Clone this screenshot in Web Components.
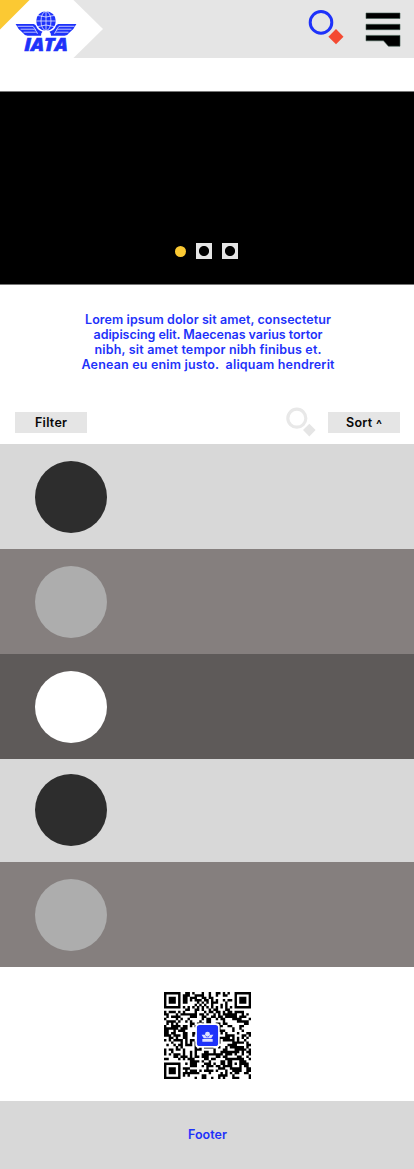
<!DOCTYPE html>
<html lang="en"><head><meta charset="utf-8"><title>IATA</title>
<style>body{margin:0;background:#fff;width:414px;overflow-x:hidden}</style></head>
<body><iata-page></iata-page>
<script>
const define=(name,html,ready)=>customElements.define(name,class extends HTMLElement{
 constructor(){super();this.attachShadow({mode:'open'}).innerHTML=html}
 connectedCallback(){if(ready)ready.call(this,this.shadowRoot)}
});

/* A single line of text tracked out to a given measure. */
define('fit-line',`<style>:host{display:block;line-height:inherit;white-space:pre}span{display:inline-block}</style><span><slot></slot></span>`,function(root){
 const s=root.querySelector('span'),w=+this.getAttribute('width'),n=this.textContent.length;
 const now=s.getBoundingClientRect().width;
 const gap=(w-now)/(n-1);
 s.style.letterSpacing=gap+'px';
 s.style.marginRight=-gap+'px';
});

define('iata-logo',`<style>:host{display:block}svg{display:block}</style>
<svg width="104" height="58" viewBox="0 0 104 58">
<path fill="#fff" d="M0 0H73.500L103 29 73.500 58H0z"/><path fill="#fbc933" d="M0 0H29.500L0 29.500z"/>
<g fill="#1e32fa">
<path d="M15.600 24H33.500Q36 24.500 37 28Q39 31 42.500 31.800Q41 33 41 35.800H27.500Q24.500 35.500 23 33Q18 29.500 15.600 24z"/>
<path d="M76.400 24H58.500Q56 24.500 55 28Q53 31 49.500 31.800Q51 33 51 35.800H64.500Q67.500 35.500 69 33Q74 29.500 76.400 24z"/>
<circle cx="46" cy="21" r="9.800"/></g>
<g fill="none" stroke="#fff" stroke-width=".7">
<path d="M17.500 26.300H33l3 4M20.500 29.200H34l3 3M23.500 32.200H35.500l2.500 1.200M74.500 26.300H59l-3 4M71.500 29.200H58l-3 3M68.500 32.200H56.500l-2.500 1.200"/>
<path d="M46 11V31M36 21H56M38 15.500Q46 18.500 54 15.500M38 26.500Q46 23.500 54 26.500"/><ellipse cx="46" cy="21" rx="5" ry="9.600"/></g>
<text x="24.300" y="50.700" textLength="43.400" lengthAdjust="spacingAndGlyphs" font-family="Open Sans,sans-serif" font-size="17.600" font-weight="800" font-style="italic" fill="#1e32fa" stroke="#1e32fa" stroke-width=".6">IATA</text>
</svg>`);

define('search-icon',`<style>:host{display:block;width:36px;height:36px;--ring:#1e32fa;--gem:#f44a32;--w:3}svg{display:block;width:100%;height:100%}circle{stroke-width:var(--w)}</style>
<svg viewBox="0 0 36 36"><circle cx="13" cy="13.400" r="10.800" fill="none" stroke="var(--ring)"/><path d="M28 20l7.500 7.700-7.500 7.600-7.600-7.600z" fill="var(--gem)"/></svg>`);

define('menu-icon',`<style>:host{display:block}svg{display:block}</style>
<svg width="36" height="36" viewBox="0 0 36 36"><path d="M1 2H35V7.500H1zM1 13.300H35V18.700H1zM1 24.400H35V35.200H23.400L18.500 29.800H1z" stroke="#3f5c50" stroke-width=".6"/></svg>`);

define('site-header',`<style>:host{display:flex;height:58px;background:#e5e5e5}search-icon{margin:9px 0 0 204px}menu-icon{margin:11px 0 0 21px}</style>
<iata-logo></iata-logo><search-icon></search-icon><menu-icon></menu-icon>`);

define('hero-banner',`<style>:host{display:flex;box-sizing:border-box;height:194px;margin-top:33px;background:#000;border-top:1px solid #777;border-bottom:1px solid #777;padding:151px 0 0 175px;align-items:flex-start}
b{width:11px;height:11px;border-radius:50%;background:#fbc933;margin:3px 10px 0 0}i{width:16px;height:16px;margin-right:10px;background:radial-gradient(circle at 8px 8px,#000 4.600px,#e5e5e5 5.500px)}</style><b></b><i></i><i></i>`);

define('intro-text',`<style>:host{display:block;height:60px;margin:27px 0 0 2px;font:600 12.500px/15px Inter,sans-serif;color:#1e32fa;text-align:center}</style>
<fit-line width="246">Lorem ipsum dolor sit amet, consectetur</fit-line><fit-line width="229">adipiscing elit. Maecenas varius tortor</fit-line><fit-line width="227">nibh, sit amet tempor nibh finibus et.</fit-line><fit-line width="253">Aenean eu enim justo.  aliquam hendrerit</fit-line>`);

define('tool-button',`<style>:host{display:flex;width:72px;height:21px;background:#e5e5e5;justify-content:center;font:600 12.500px/21px Inter,sans-serif;color:#080808}</style><slot></slot>`);

define('tool-bar',`<style>:host{display:flex;height:72px;box-sizing:border-box;padding:40px 14px 0 15px;align-items:flex-start}search-icon{width:30px;height:30px;margin:-5px 12px 0 auto;--ring:#e8e8e8;--gem:#e5e5e5;--w:3.800}.caret{position:relative;top:2px}</style>
<tool-button><fit-line width="32">Filter</fit-line></tool-button><search-icon></search-icon><tool-button><fit-line width="36">Sort <span class="caret">^</span></fit-line></tool-button>`);

define('list-row',`<style>:host{display:flex;box-sizing:border-box;height:105px;padding:17px 0 0 35px;background:#d8d8d8;--dot:#2d2d2d}
:host([tone=mid]){background:#857f7e;--dot:#adadad}:host([tone=dark]){background:#5e5a59;--dot:#fff}:host([short]){height:103px;padding-top:15px}
i{width:72px;height:72px;border-radius:50%;background:var(--dot)}</style><i></i>`);

define('qr-code',`<style>:host{display:block;width:87px;height:87px}svg{display:block}</style><svg width="87" height="87" viewBox="0 0 37 37"></svg>`,function(root){
 const N=37,m=[];let seed=91;
 const next=()=>(seed=(seed*1103515245+12345)&0x7fffffff)/0x7fffffff;
 for(let y=0;y<N;y++){m[y]=[];for(let x=0;x<N;x++)m[y][x]=next()<.52}
 for(let i=8;i<29;i++)m[6][i]=m[i][6]=i%2===0;
 for(const [a,b] of [[0,0],[30,0],[0,30]])for(let y=-1;y<8;y++)for(let x=-1;x<8;x++){
  const r=Math.max(Math.abs(x-3),Math.abs(y-3));
  if(m[b+y]&&a+x>=0&&a+x<N)m[b+y][a+x]=r===3||r<2;
 }
 for(let y=-2;y<3;y++)for(let x=-2;x<3;x++)m[30+y][30+x]=Math.max(Math.abs(x),Math.abs(y))!==1;
 let d='';
 m.forEach((r,y)=>r.forEach((v,x)=>{if(v)d+=`M${x} ${y}h1.030v1.030h-1.030z`}));
 root.querySelector('svg').innerHTML=`<path d="${d}"/><rect x="13.300" y="13.300" width="10.400" height="10.400" rx="1.400" fill="#fff"/><rect x="14" y="14" width="9" height="9" rx="1.100" fill="#1e32fa"/>
 <g fill="#dde0ff"><circle cx="18.500" cy="18" r="1.050"/><path d="M16 18.200h1.300l.7 1h1l.7-1H21l-.9 1.500h-3.200zM16.300 20h4.400v1.200h-4.400z"/></g>`;
});

define('site-footer',`<style>:host{display:flex;justify-content:center;height:68px;padding-left:1px;background:#d8d8d8;color:#1e32fa;font:600 12.500px/68px Inter,sans-serif}</style><fit-line width="39">Footer</fit-line>`);

define('iata-page',`<style>:host{display:block;width:414px;height:1169px}qr-code{margin:25px 0 22px 164px}</style>
<site-header></site-header><hero-banner></hero-banner><intro-text></intro-text><tool-bar></tool-bar>
<list-row></list-row><list-row tone="mid"></list-row><list-row tone="dark"></list-row><list-row short></list-row><list-row tone="mid"></list-row>
<qr-code></qr-code><site-footer></site-footer>`);
</script></body></html>
